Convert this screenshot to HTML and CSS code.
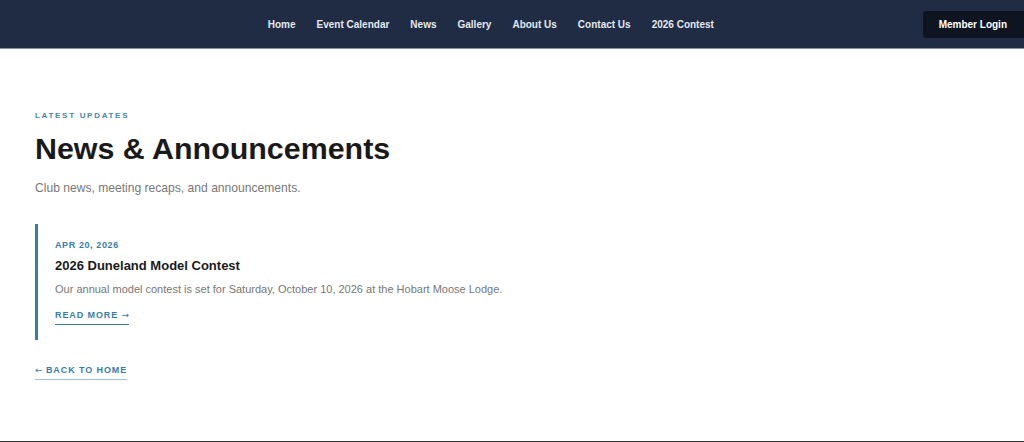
FILE: index.html
```html
<!DOCTYPE html>
<html lang="en">
<head>
    <meta charset="UTF-8">
    <meta name="viewport" content="width=device-width, initial-scale=1.0">
    <title>News &amp; Announcements</title>
    <link rel="stylesheet" href="styles.css">
</head>
<body>

<!-- Top navigation -->
<header class="site-header">
    <nav class="main-nav">
        <a href="#">Home</a>
        <a href="#">Event Calendar</a>
        <a href="#">News</a>
        <a href="#">Gallery</a>
        <a href="#">About Us</a>
        <a href="#">Contact Us</a>
        <a href="#">2026 Contest</a>
    </nav>
    <a href="#" class="login-btn">Member Login</a>
</header>

<main class="page">
    <div class="eyebrow">Latest Updates</div>
    <h1 class="page-title">News &amp; Announcements</h1>
    <p class="page-sub">Club news, meeting recaps, and announcements.</p>

    <!-- News list -->
    <article class="news-item">
        <div class="news-date">Apr 20, 2026</div>
        <h2 class="news-title">2026 Duneland Model Contest</h2>
        <p class="news-text">Our annual model contest is set for Saturday, October 10, 2026 at the Hobart Moose Lodge.</p>
        <a href="#" class="text-link">Read More <span class="arrow">&rarr;</span></a>
    </article>

    <a href="#" class="text-link back-link"><span class="arrow">&larr;</span> Back to Home</a>
</main>

<footer class="site-footer"></footer>

</body>
</html>
```

FILE: styles.css
```css
/* Basic reset */
html, body {
    margin: 0;
    padding: 0;
    font-family: "Liberation Sans", Arial, sans-serif;
    background-color: #fff;
    color: #1a1a1a;
}

a {
    text-decoration: none;
}

/* Header bar */
.site-header {
    height: 48px;
    background-color: #1f2c43;
    border-bottom: 1px solid #8a9099;
    display: flex;
    align-items: center;
}

.main-nav {
    flex: 1;
    display: flex;
    justify-content: center;
    gap: 21px;
    padding-left: 59px;
}

.main-nav a {
    color: #e3e8ef;
    font-size: 10px;
    font-weight: bold;
}

.login-btn {
    background-color: #0e1521;
    color: #fff;
    font-size: 10px;
    font-weight: bold;
    padding: 8px 17px 8px 16px;
    line-height: 11px;
    border-radius: 3px 0 0 3px;
}

/* Main content */
.page {
    padding: 62px 35px 61px;
    display: flex;
    flex-direction: column;
    align-items: flex-start;
}

.eyebrow {
    font-size: 8px;
    font-weight: bold;
    letter-spacing: 1.7px;
    text-transform: uppercase;
    color: #4a86aa;
    line-height: 10px;
}

.page-title {
    font-size: 30.4px;
    font-weight: bold;
    margin: 9px 0 0;
    line-height: 36px;
    color: #1a1a1a;
}

.page-sub {
    font-size: 12.1px;
    color: #777;
    margin: 14px 0 0;
    line-height: 16px;
}

/* News card */
.news-item {
    align-self: stretch;
    margin-top: 28px;
    border-left: 3px solid #3a7ca5;
    padding: 15px 0 15px 17px;
    display: flex;
    flex-direction: column;
    align-items: flex-start;
}

.news-date {
    font-size: 9px;
    font-weight: bold;
    letter-spacing: 0.6px;
    text-transform: uppercase;
    color: #3a7ca5;
    line-height: 12px;
}

.news-title {
    font-size: 13px;
    font-weight: bold;
    margin: 6px 0 0;
    line-height: 18px;
}

.news-text {
    font-size: 11px;
    color: #777;
    margin: 6px 0 0;
    line-height: 16px;
}

.text-link {
    font-size: 9px;
    font-weight: bold;
    letter-spacing: 0.9px;
    text-transform: uppercase;
    color: #3a7ca5;
    line-height: 12px;
    padding-bottom: 3px;
    border-bottom: 1px solid #3a7ca5;
}

.arrow {
    font-family: "DejaVu Sans", sans-serif;
    font-weight: normal;
    letter-spacing: 0;
}

.news-item .text-link {
    margin-top: 12px;
}

.back-link {
    margin-top: 24px;
    border-bottom-color: #9fc0d6;
}

/* Footer */
.site-footer {
    height: 40px;
    background-color: #333;
}
```
